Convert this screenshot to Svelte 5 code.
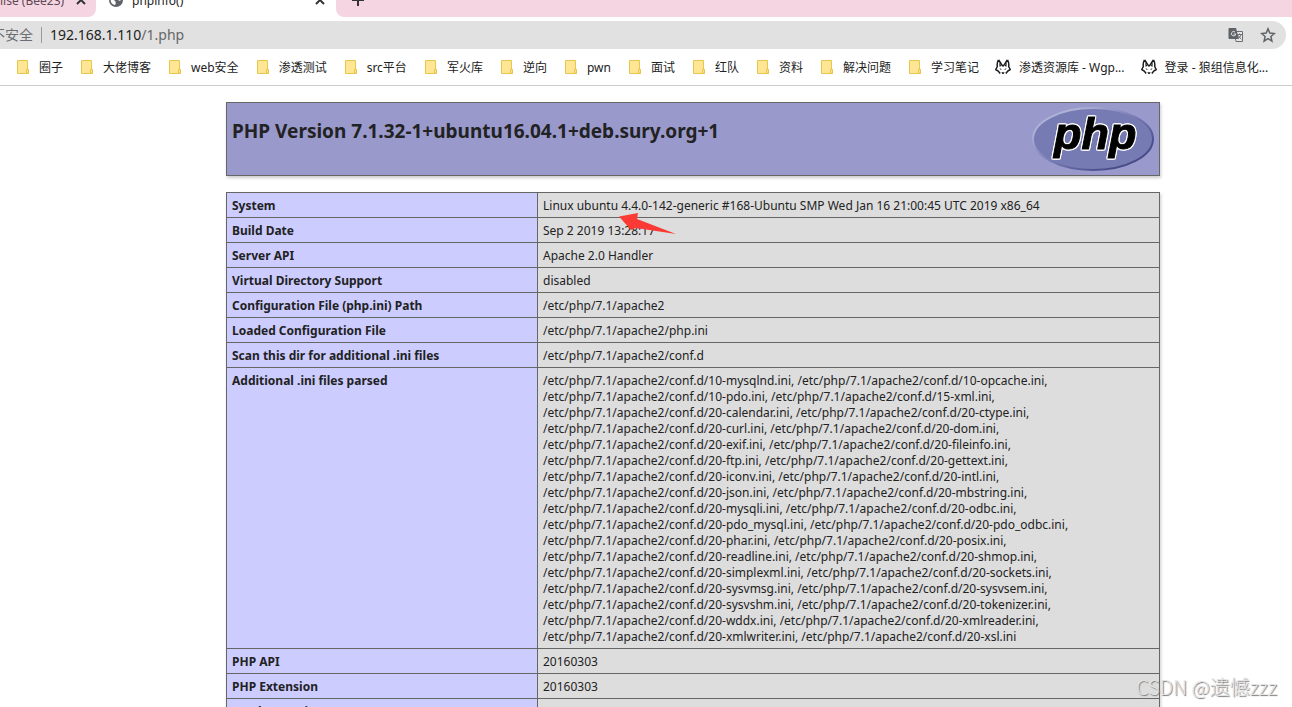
<script lang="ts">
    const bookmarks = [
        {label: "圈子", icon: "folder"},
        {label: "大佬博客", icon: "folder"},
        {label: "web安全", icon: "folder"},
        {label: "渗透测试", icon: "folder"},
        {label: "src平台", icon: "folder"},
        {label: "军火库", icon: "folder"},
        {label: "逆向", icon: "folder"},
        {label: "pwn", icon: "folder"},
        {label: "面试", icon: "folder"},
        {label: "红队", icon: "folder"},
        {label: "资料", icon: "folder"},
        {label: "解决问题", icon: "folder"},
        {label: "学习笔记", icon: "folder"},
        {label: "渗透资源库 - Wgp...", icon: "wolf"},
        {label: "登录 - 狼组信息化...", icon: "wolf"},
    ];

    const iniDir = "/etc/php/7.1/apache2/conf.d/";

    // two files to a line
    const iniFiles = [
        ["10-mysqlnd", "10-opcache"],
        ["10-pdo", "15-xml"],
        ["20-calendar", "20-ctype"],
        ["20-curl", "20-dom"],
        ["20-exif", "20-fileinfo"],
        ["20-ftp", "20-gettext"],
        ["20-iconv", "20-intl"],
        ["20-json", "20-mbstring"],
        ["20-mysqli", "20-odbc"],
        ["20-pdo_mysql", "20-pdo_odbc"],
        ["20-phar", "20-posix"],
        ["20-readline", "20-shmop"],
        ["20-simplexml", "20-sockets"],
        ["20-sysvmsg", "20-sysvsem"],
        ["20-sysvshm", "20-tokenizer"],
        ["20-wddx", "20-xmlreader"],
        ["20-xmlwriter", "20-xsl"],
    ];

    const parsed = iniFiles
        .map((line) => line.map((name) => iniDir + name + ".ini").join(", "))
        .join(",\n");

    const rows = [
        ["System", "Linux ubuntu 4.4.0-142-generic #168-Ubuntu SMP Wed Jan 16 21:00:45 UTC 2019 x86_64"],
        ["Build Date", "Sep 2 2019 13:28:17"],
        ["Server API", "Apache 2.0 Handler"],
        ["Virtual Directory Support", "disabled"],
        ["Configuration File (php.ini) Path", "/etc/php/7.1/apache2"],
        ["Loaded Configuration File", "/etc/php/7.1/apache2/php.ini"],
        ["Scan this dir for additional .ini files", "/etc/php/7.1/apache2/conf.d"],
        ["Additional .ini files parsed", parsed],
        ["PHP API", "20160303"],
        ["PHP Extension", "20160303"],
        ["Zend Extension", "320160303"],
    ];
</script>

<div class="window">
    <div class="tabs">
        <div class="tab first">
            <span class="name">lise (Bee23)</span>
            <button type="button" aria-label="Close tab">
                <svg width="10" height="10" viewBox="0 0 10 10"><path d="M1 1l8 8M9 1l-8 8" /></svg>
            </button>
        </div>
        <div class="tab active">
            <svg class="globe" width="14" height="14" viewBox="0 0 14 14">
                <circle cx="7" cy="7" r="7" fill="#5f6368" />
                <path d="M2 6c2 0 3 1 4 2s1 3 0 4C3 12 1 9 2 6zM8 2c2 0 4 2 4 5-1 1-3 1-3-1S6 5 8 2z" fill="#fff" />
            </svg>
            <span class="name">phpinfo()</span>
            <button type="button" aria-label="Close tab">
                <svg width="10" height="10" viewBox="0 0 10 10"><path d="M1 1l8 8M9 1l-8 8" /></svg>
            </button>
        </div>
        <div class="tab rest">
            <button type="button" aria-label="New tab">
                <svg width="12" height="12" viewBox="0 0 12 12"><path d="M6 0v12M0 6h12" /></svg>
            </button>
        </div>
    </div>

    <div class="address">
        <span class="insecure">不安全</span>
        <span class="divider"></span>
        <span class="url">192.168.1.110<span class="path">/1.php</span></span>
        <button type="button" aria-label="Translate">
            <svg width="16" height="16" viewBox="0 0 16 16">
                <path d="M6 4.500h8.500v10H8z" fill="#e8e8e8" stroke="#6b6e72" />
                <path d="M1.500 1h6.500l3 11H1.500A1 1 0 0 1 .5 11V2a1 1 0 0 1 1-1z" fill="#5f6368" />
                <path d="M7 5a2.200 2.200 0 1 0 .8 2H5.500" fill="none" stroke="#e1e1e1" />
                <path d="M9.500 7.500h4.500M11.500 6.500v1M13 7.500c-.5 2-1.500 3-2.500 4M10.500 8.500c.5 1.500 1.500 2.500 2.800 3.500" fill="none" stroke="#6b6e72" />
            </svg>
        </button>
        <button type="button" aria-label="Bookmark this page">
            <svg width="16" height="16" viewBox="0 0 16 16">
                <path d="M8 1.800l1.800 4.300 4.600.4-3.500 3 1 4.600L8 11.700l-3.900 2.400 1-4.600-3.500-3 4.600-.4z" fill="none" stroke="#5f6368" stroke-width="1.500" />
            </svg>
        </button>
    </div>

    <nav class="bookmarks">
        {#each bookmarks as mark}
            <a href="#bookmark">
                {#if mark.icon == "folder"}
                    <svg width="16" height="16" viewBox="0 0 16 16">
                        <path d="M2.500 1.500h10v9h1v4h-11z" fill="#ffe694" stroke="#e8c64d" />
                        <path d="M11.500 14v-3.500h2v3.500z" fill="#ffe694" stroke="#e8c64d" />
                    </svg>
                {:else}
                    <svg width="16" height="16" viewBox="0 0 16 16">
                        <path d="M3.500 1L7 5.500h2L12.500 1l1.500 6 1.300 3.500-2.300 1.500-2.500 2.700h-5L3 12 .7 10.500 2 7z" fill="#fff" />
                        <path d="M3.500.8C2.300 3 2 5.500 2.300 7.500L.8 10.500 3.200 12l2 2.500M12.500.8c1.200 2.200 1.500 4.700 1.200 6.700l1.500 3-2.400 1.500-2 2.500M3.700 1L6.500 5.500 8 7l1.500-1.500L12.300 1" fill="none" stroke="#1b1b1b" stroke-width="1.500" />
                        <path d="M4.300 3.500l2 3.500-1.800.8zM11.700 3.500l-2 3.500 1.800.8zM4.500 9l2.500 1.500-1.500.2zM11.500 9L9 10.500l1.500.2zM6.300 13.200h3.400L8.600 15H7.400z" fill="#1b1b1b" />
                    </svg>
                {/if}
                <span>{mark.label}</span>
            </a>
        {/each}
    </nav>

    <main>
        <div class="center">
            <header>
                <h1>PHP Version 7.1.32-1+ubuntu16.04.1+deb.sury.org+1</h1>
                <svg class="logo" width="122" height="66" viewBox="0 0 122 66" role="img" aria-label="PHP logo">
                    <defs>
                        <linearGradient id="rim" x1="0" y1="0" x2="1" y2="1">
                            <stop offset="0.2" stop-color="#aeb2d5" />
                            <stop offset="0.5" stop-color="#777bb3" />
                            <stop offset="0.8" stop-color="#484c89" />
                        </linearGradient>
                    </defs>
                    <ellipse cx="61" cy="33" rx="60" ry="31" fill="#777bb3" stroke="url(#rim)" stroke-width="2" />
                    <text x="22" y="43">php</text>
                </svg>
            </header>

            <table>
                <tbody>
                    {#each rows as [name, value], index}
                        <tr>
                            <th scope="row">{name}</th>
                            <td>
                                {value}
                                {#if index == 0}
                                    <svg class="arrow" width="58" height="22" viewBox="0 0 58 22">
                                        <path d="M0 3.500L19 0l-1 6 39 15-40-6-5 2z" fill="#fb3a35" />
                                    </svg>
                                {/if}
                            </td>
                        </tr>
                    {/each}
                </tbody>
            </table>
        </div>
    </main>

    <div class="watermark">CSDN @遗憾zzz</div>
</div>

<style>
    :global(body){
        margin:0;
        background:white;
    }

    .window{
        position:relative;
        height:100vh;
        overflow:hidden;
        font-family:"Noto Sans", "Noto Sans CJK SC", sans-serif;
        font-size:12px;
        color:#222;
    }

    button{
        display:flex;
        padding:0;
        border:none;
        background:transparent;
    }

    .tabs{
        display:flex;
        height:17px;
        overflow:hidden;
        background:white;
    }

    .tab{
        box-sizing:border-box;
        display:flex;
        align-items:center;
        height:34px;
        margin-top:-17px;
        background:#f6d5e3;
        white-space:nowrap;
    }

    .tab path{
        fill:none;
        stroke:#333;
        stroke-width:2;
    }

    .tab .globe path{
        fill:white;
        stroke:none;
    }

    .tab .name{
        flex:1;
    }

    .first{
        width:96px;
        padding-right:10px;
        border-bottom-right-radius:8px;
        color:#5c4a52;
    }

    .first .name{
        overflow:hidden;
    }

    .active{
        width:240px;
        padding:0 11px 0 13px;
        gap:9px;
        background:white;
    }

    .rest{
        flex:1;
        padding-left:16px;
        border-bottom-left-radius:8px;
    }

    .address{
        display:flex;
        align-items:center;
        height:28px;
        margin:4px 6px 0 0;
        padding-right:10px;
        gap:16px;
        background:#e1e1e1;
        border-radius:0 14px 14px 0;
        font-size:14px;
        line-height:18px;
    }

    .insecure{
        margin-left:-9px;
        color:#6b6e72;
    }

    .divider{
        width:1px;
        height:16px;
        margin:0 -8px;
        background:#999;
    }

    .url{
        flex:1;
    }

    .path{
        color:#666;
    }

    .bookmarks{
        display:flex;
        align-items:center;
        height:36px;
        padding-left:15px;
        gap:16px;
        border-bottom:1px solid #ccc;
    }

    .bookmarks a{
        display:flex;
        align-items:center;
        gap:8px;
        color:#222;
        text-decoration:none;
        white-space:nowrap;
    }

    main{
        padding:16px 0 0 94px;
    }

    .center{
        max-width:934px;
        margin:0 auto;
    }

    header{
        box-sizing:border-box;
        display:flex;
        justify-content:space-between;
        align-items:flex-start;
        height:74px;
        padding:3px 5px;
        background:#99c;
        border:1px solid #666;
        box-shadow:1px 2px 3px #ccc;
    }

    h1{
        margin:12px 0 0;
        font-size:19px;
        line-height:26px;
    }

    .logo text{
        font-family:"Liberation Sans", sans-serif;
        font-size:45px;
        font-weight:bold;
        font-style:italic;
        fill:black;
        stroke:black;
        stroke-width:1px;
        filter:drop-shadow(1px 0 0 white) drop-shadow(-1px 0 0 white) drop-shadow(0 1px 0 white) drop-shadow(0 -1px 0 white);
    }

    table{
        width:100%;
        margin-top:16px;
        border-collapse:collapse;
        box-shadow:1px 2px 3px #ccc;
    }

    th, td{
        padding:5px 5px 3px;
        border:1px solid #666;
        line-height:16px;
        text-align:left;
        vertical-align:top;
    }

    th{
        width:300px;
        background:#ccf;
    }

    td{
        position:relative;
        background:#ddd;
        white-space:pre-line;
    }

    .arrow{
        position:absolute;
        left:81px;
        top:20px;
        z-index:1;
    }

    .watermark{
        position:absolute;
        right:15px;
        bottom:8px;
        font-family:"Noto Sans CJK SC", sans-serif;
        font-size:20px;
        font-weight:300;
        line-height:24px;
        color:#e4e4e4;
        text-shadow:1px 1px 1px #777;
    }
</style>
